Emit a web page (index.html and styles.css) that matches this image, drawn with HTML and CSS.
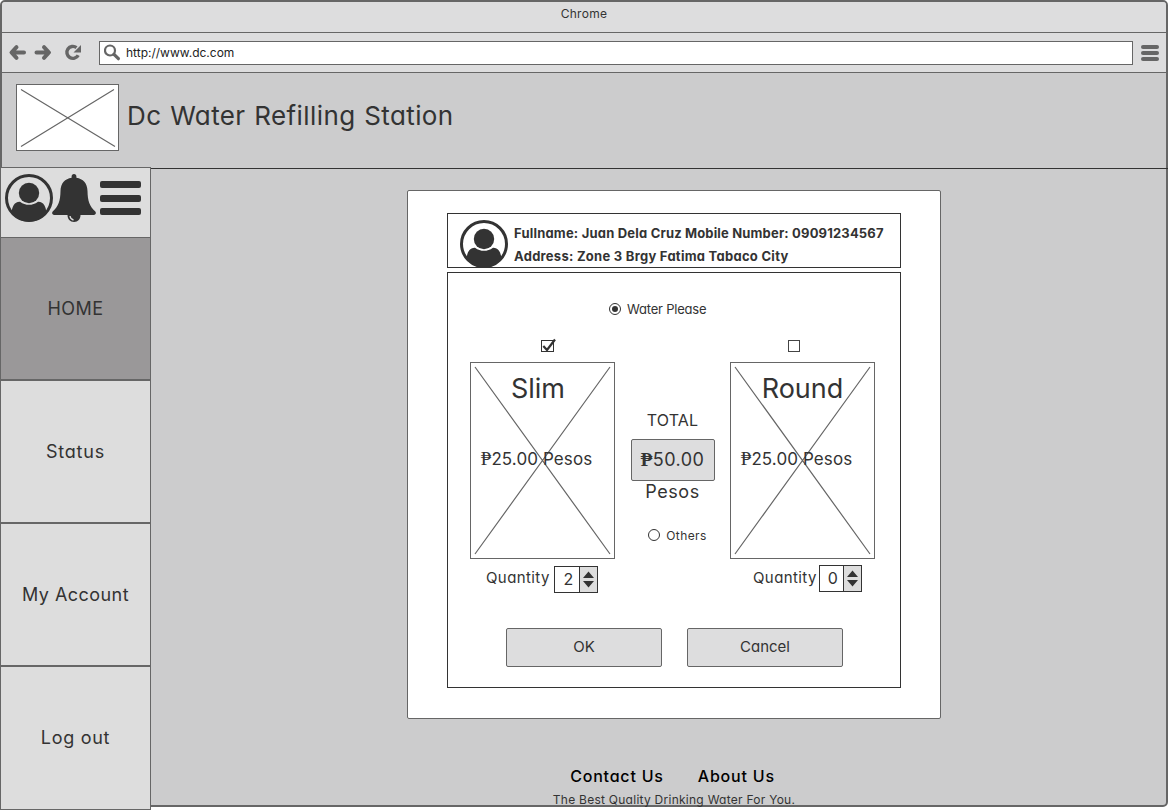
FILE: index.html
```
<!DOCTYPE html>
<html lang="en">
<head>
<meta charset="utf-8">
<title>Dc Water Refilling Station</title>
<link rel="stylesheet" href="styles.css">
</head>
<body>
<svg class="defs" aria-hidden="true">
  <symbol id="user" viewBox="0 0 48 48">
    <circle cx="24" cy="24" r="22.500" fill="none" stroke="currentColor" stroke-width="3"/>
    <circle cx="24" cy="19" r="10.200"/>
    <path d="M6.500 39c.5-6 2.500-11.500 8.500-11.300 3 2.200 5.800 3.100 9 3.100s6-.9 9-3.100c6-.2 8 5.300 8.500 11.300C37 45 31 47.500 24 47.500S11 45 6.500 39z"/>
  </symbol>
</svg>
<div class="window">
  <div class="titlebar"><span class="t-chrome">Chrome</span></div>
  <div class="toolbar">
    <svg class="nav" width="90" height="24" viewBox="0 0 90 24">
      <g fill="none" stroke="currentColor" stroke-linejoin="round" stroke-linecap="round">
        <path d="M15.500 6.200L10.500 11.500l5 5.300M11 11.500h12M43 6.200l5 5.300-5 5.300M47.500 11.500h-12" stroke-width="4"/>
        <path d="M75.500 6.600a6 6 0 1 0 1.700 7.600" stroke-width="3.400" stroke-linecap="butt"/>
      </g>
      <path d="M80 4v7.500h-7.500z"/>
    </svg>
    <div class="address">
      <svg class="outline" width="18" height="18" viewBox="0 0 18 18" stroke="currentColor"><circle cx="6" cy="6.500" r="5" stroke-width="2.200"/><path d="M10 10.300l4.400 4.400" stroke-width="3.200" stroke-linecap="round"/></svg>
      <span class="t-url">http://www.dc.com</span>
    </div>
    <div class="menu"><i></i><i></i><i></i></div>
  </div>
  <header class="header">
    <svg class="logo" width="103" height="67"><path d="M4 4.500l94 57M97 4.500l-93 57" stroke="currentColor" stroke-width="1.200" fill="none"/></svg>
    <h1 class="t-title">Dc Water Refilling Station</h1>
  </header>
  <div class="body">
    <nav class="sidebar">
      <div class="icons">
        <svg width="48" height="48"><use href="#user"/></svg>
        <svg class="bell" width="44" height="48" viewBox="0 0 44 48"><path d="M22 0c1.500 0 2.400 1 2.400 2.600v1.200C31 5 35.300 9 35.500 17c.2 10 2 15 7.800 20.500 1.200 1.700.4 3.500-1.500 3.500H2.200C.3 41-.5 39.200.7 37.500 6.500 32 8.300 27 8.500 17 8.700 9 13 5 19.600 3.800V2.600C19.600 1 20.500 0 22 0z"/><path d="M15.500 41h13c0 4-2.500 7-6.500 7s-6.500-3-6.500-7z"/><path d="M18 42c.3 2.200 1.500 3.500 3.500 4" fill="none" stroke="#ddd" stroke-width="1.300"/></svg>
        <div class="bars"><i></i><i></i><i></i></div>
      </div>
      <a class="item active"><span class="t-home">HOME</span></a>
      <a class="item"><span class="t-status">Status</span></a>
      <a class="item"><span class="t-account">My Account</span></a>
      <a class="item last"><span class="t-logout">Log out</span></a>
    </nav>
    <main class="main">
      <section class="card">
        <div class="info">
          <svg width="48" height="48"><use href="#user"/></svg>
          <div class="details">
            <div class="line"><span class="t-name">Fullname: Juan Dela Cruz</span><span class="t-mobile">Mobile Number: 09091234567</span></div>
            <div class="line"><span class="t-addr">Address: Zone 3 Brgy Fatima Tabaco City</span></div>
          </div>
        </div>
        <div class="order">
          <div class="radio top"><span class="dot on"></span><span class="t-water">Water Please</span></div>
          <div class="columns">
            <div class="product">
              <svg class="check outline" width="18" height="18" viewBox="0 0 18 18" stroke="#333"><rect x="2.500" y="4.500" width="12" height="11"/><path d="M4.300 10l3.700 4L16 3.500" stroke-width="2.200"/></svg>
              <div class="tile">
                <svg class="outline" width="143" height="195"><path d="M4 4l135 187M139 4L4 191" stroke="currentColor" stroke-width="1.200"/></svg>
                <span class="t-slim">Slim</span>
                <span class="t-price"><b>₱</b>25.00 Pesos</span>
              </div>
              <div class="qty"><span class="t-qty">Quantity</span><div class="stepper"><span>2</span><svg width="18" height="25"><path d="M3 11l5.500-6.500L14 11zM3 14l5.500 6.500L14 14z"/></svg></div></div>
            </div>
            <div class="total">
              <span class="t-total">TOTAL</span>
              <div class="amount"><span class="t-amount"><b>₱</b>50.00</span></div>
              <span class="t-pesos">Pesos</span>
              <div class="radio"><span class="dot"></span><span class="t-others">Others</span></div>
            </div>
            <div class="product second">
              <svg class="check outline" width="18" height="18" viewBox="0 0 18 18" stroke="#444"><rect x="3.500" y="4.500" width="11" height="11"/></svg>
              <div class="tile">
                <svg class="outline" width="143" height="195"><path d="M4 4l135 187M139 4L4 191" stroke="currentColor" stroke-width="1.200"/></svg>
                <span class="t-round">Round</span>
                <span class="t-price"><b>₱</b>25.00 Pesos</span>
              </div>
              <div class="qty"><span class="t-qty">Quantity</span><div class="stepper"><span>0</span><svg width="18" height="25"><path d="M3 11l5.500-6.500L14 11zM3 14l5.500 6.500L14 14z"/></svg></div></div>
            </div>
          </div>
          <div class="actions"><button class="t-ok">OK</button><button class="t-cancel">Cancel</button></div>
        </div>
      </section>
      <footer class="footer">
        <div class="links"><a class="t-contact">Contact Us</a><a class="t-about">About Us</a></div>
        <p class="t-tag">The Best Quality Drinking Water For You.</p>
      </footer>
    </main>
  </div>
</div>
</body>
</html>
```
FILE: styles.css
```
* { box-sizing: border-box; }
body { margin: 0; height: 811px; overflow: hidden; background: #fff; color: #333; font-family: Inter, "Noto Sans", sans-serif; font-feature-settings: "cv11"; white-space: nowrap; }
svg { display: block; flex: none; fill: currentColor; }
svg.outline { fill: none; }
.defs { display: none; }
.window { width: 1168px; height: 807px; border: 2px solid #666; border-radius: 5px; background: #cccccd; display: flex; flex-direction: column; }
.titlebar { height: 31px; flex: none; background: #ddddde; border-bottom: 1px solid #666; border-radius: 3px 3px 0 0; display: flex; justify-content: center; line-height: 23px; }
.toolbar { height: 40px; flex: none; background: #ddddde; border-bottom: 1px solid #666; display: flex; align-items: center; padding: 0 6px 0 0; color: #666; }
.nav { width: 90px; margin: 0 8px 0 -1px; }
.address { width: 1034px; height: 24px; background: #fff; border: 1px solid #666; display: flex; align-items: center; padding-left: 4px; gap: 4px; color: #666; }
.address span { color: #222; }
.menu { display: flex; flex-direction: column; gap: 2px; margin-left: 8px; }
.menu i { width: 18px; height: 4px; background: #666; border-radius: 2px; }
.header { height: 96px; flex: none; margin-right: -2px; border-bottom: 1px solid #333; display: flex; align-items: flex-start; padding: 11px 0 0 14px; }
.logo { background: #fff; border: 1px solid #666; color: #666; }
h1 { margin: 16px 0 0 8px; line-height: 32px; }
.body { flex: 1; min-height: 0; display: flex; }
.sidebar { width: 151px; height: 643px; flex: none; margin: -2px 0 0 -2px; background: #ddd; }
.icons { height: 70px; border: 1px solid #666; border-bottom: 0; display: flex; padding: 6px 0 0 4px; }
.bell { margin-left: -1px; }
.bars { display: flex; flex-direction: column; gap: 6.500px; margin: 7px 0 0 4px; }
.bars i { width: 41px; height: 7px; background: #333; border-radius: 2px; }
.item { height: 143px; border: 1px solid #666; display: flex; align-items: center; justify-content: center; }
.item.last { height: 144px; padding-bottom: 2px; }
.item.active { background: #9a9899; }
.main { flex: 1; display: flex; flex-direction: column; padding: 21px 0 0 256px; }
.card { width: 534px; height: 529px; flex: none; background: #fff; border: 1px solid #666; border-radius: 2px; padding: 22px 39px; display: flex; flex-direction: column; gap: 4px; }
.info { height: 55px; border: 1px solid #333; display: flex; padding: 6px 0 0 12px; gap: 6px; overflow: hidden; }
.details { padding-top: 2px; }
.line { display: flex; height: 23px; line-height: 22px; font-weight: 700; }
.order { height: 416px; border: 1px solid #333; padding: 27px 0 0 22px; }
.radio { display: flex; align-items: center; height: 18px; gap: 6px; }
.radio.top { margin-left: 139px; }
.dot { width: 12px; height: 12px; border: 1.400px solid #333; border-radius: 50%; padding: 2px; background: #fff content-box; }
.dot.on { background: #333 content-box; }
.columns { display: grid; grid-template-columns: 145px 84px 145px; column-gap: 15.500px; margin-top: 18px; }
.product { height: 257px; }
.check { margin: 0 0 8px 69px; }
.second .check { margin-left: 55px; }
.tile { width: 145px; height: 197px; border: 1px solid #666; color: #666; display: grid; justify-items: center; grid-template-rows: 195px; grid-template-columns: 143px; }
.tile > * { grid-area: 1 / 1; }
.tile span { color: #333; }
.tile .t-slim, .tile .t-round { padding-top: 10px; }
.tile .t-slim { margin-right: 9px; }
.tile .t-price { padding-top: 84px; margin-right: 12px; }
.t-price b { font: 19px "Liberation Serif", serif; }
.t-amount b { font: bold 19px "Liberation Serif", serif; }
.qty { display: flex; margin: 7px 0 0 16px; }
.second .qty { margin-left: 23px; }
.stepper { width: 44px; height: 27px; border: 1px solid #333; display: flex; margin-left: 4px; }
.second .stepper { width: 43px; margin: -1px 0 0 2px; }
.stepper span { flex: 1; padding-left: 3px; text-align: center; font-size: 16px; line-height: 25px; }
.stepper svg { border-left: 1px solid #333; background: #ddd; }
.total { display: flex; flex-direction: column; align-items: center; padding-top: 73px; }
.amount { width: 84px; height: 42px; background: #ddddde; border: 1px solid #666; border-radius: 2px; display: flex; justify-content: center; line-height: 40px; margin-top: 8px; }
.total .radio { margin: 23px 0 0 10px; }
.actions { display: flex; gap: 25px; margin: 35px 0 0 36px; }
button { width: 156px; height: 39px; padding: 0 0 2px; border: 1px solid #666; border-radius: 2px; background: #ddddde; color: #333; font-family: inherit; font-feature-settings: inherit; }
.footer { width: 534px; padding-top: 46px; text-align: center; }
.links { display: flex; justify-content: center; gap: 34px; color: #000; line-height: 22px; margin-right: 3px; }
.footer p { margin: 5px 0 0; line-height: 16px; }
.t-chrome { font-size: 12px; letter-spacing: .3px; }
.t-url { font-size: 12px; }
.t-title { font-size: 26px; font-weight: 400; letter-spacing: .4px; word-spacing: 1px; }
.t-home { font-size: 18px; letter-spacing: .5px; }
.t-status { font-size: 18px; letter-spacing: .8px; }
.t-account { font-size: 18px; letter-spacing: .45px; }
.t-logout { font-size: 18px; letter-spacing: .7px; }
.t-name, .t-mobile, .t-addr { font-size: 13px; }
.t-name { letter-spacing: .2px; }
.t-mobile { margin-left: 3px; letter-spacing: .17px; }
.t-addr { letter-spacing: .27px; }
.t-water { font-size: 13px; letter-spacing: -.2px; }
.t-slim { font-size: 27px; line-height: 32px; }
.t-round { font-size: 27px; line-height: 32px; }
.t-price { font-size: 17px; line-height: 24px; letter-spacing: .1px; }
.t-total { font-size: 16px; line-height: 22px; letter-spacing: .2px; }
.t-amount { font-size: 18px; letter-spacing: .4px; }
.t-pesos { font-size: 18px; line-height: 22px; letter-spacing: .6px; }
.t-others { font-size: 12px; letter-spacing: .4px; }
.t-qty { font-size: 15px; line-height: 24px; letter-spacing: .4px; }
.t-ok, .t-cancel { font-size: 15px; }
.t-contact, .t-about { font-size: 16px; font-weight: 500; letter-spacing: .8px; }
.t-tag { font-size: 12px; letter-spacing: .26px; }
```
